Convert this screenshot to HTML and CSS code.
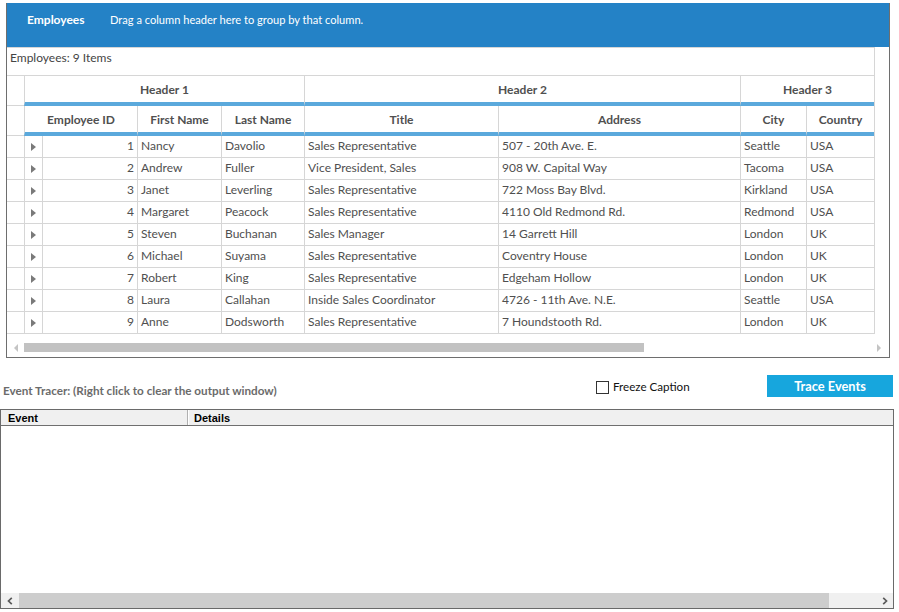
FILE: index.html
```html
<!DOCTYPE html>
<html>
<head>
<meta charset="utf-8">
<link rel="stylesheet" href="styles.css">
</head>
<body>
<div class="panel">
  <div class="titlebar">
    <span class="title">Employees</span>
    <span class="hint">Drag a column header here to group by that column.</span>
  </div>
  <div class="grid">
    <div class="info">Employees: 9 Items</div>

    <div class="ind hdr-ind"></div>
    <div class="hc span4">Header 1</div>
    <div class="hc span2">Header 2</div>
    <div class="hc span2">Header 3</div>

    <div class="ind hdr-ind"></div>
    <div class="hc span2">Employee ID</div>
    <div class="hc">First Name</div>
    <div class="hc">Last Name</div>
    <div class="hc">Title</div>
    <div class="hc">Address</div>
    <div class="hc">City</div>
    <div class="hc">Country</div>

    <div class="ind row-ind"></div><div class="c exp"><span class="tri"></span></div><div class="c num">1</div><div class="c">Nancy</div><div class="c">Davolio</div><div class="c">Sales Representative</div><div class="c">507 - 20th Ave. E.</div><div class="c">Seattle</div><div class="c">USA</div>
    <div class="ind row-ind"></div><div class="c exp"><span class="tri"></span></div><div class="c num">2</div><div class="c">Andrew</div><div class="c">Fuller</div><div class="c">Vice President, Sales</div><div class="c">908 W. Capital Way</div><div class="c">Tacoma</div><div class="c">USA</div>
    <div class="ind row-ind"></div><div class="c exp"><span class="tri"></span></div><div class="c num">3</div><div class="c">Janet</div><div class="c">Leverling</div><div class="c">Sales Representative</div><div class="c">722 Moss Bay Blvd.</div><div class="c">Kirkland</div><div class="c">USA</div>
    <div class="ind row-ind"></div><div class="c exp"><span class="tri"></span></div><div class="c num">4</div><div class="c">Margaret</div><div class="c">Peacock</div><div class="c">Sales Representative</div><div class="c">4110 Old Redmond Rd.</div><div class="c">Redmond</div><div class="c">USA</div>
    <div class="ind row-ind"></div><div class="c exp"><span class="tri"></span></div><div class="c num">5</div><div class="c">Steven</div><div class="c">Buchanan</div><div class="c">Sales Manager</div><div class="c">14 Garrett Hill</div><div class="c">London</div><div class="c">UK</div>
    <div class="ind row-ind"></div><div class="c exp"><span class="tri"></span></div><div class="c num">6</div><div class="c">Michael</div><div class="c">Suyama</div><div class="c">Sales Representative</div><div class="c">Coventry House</div><div class="c">London</div><div class="c">UK</div>
    <div class="ind row-ind"></div><div class="c exp"><span class="tri"></span></div><div class="c num">7</div><div class="c">Robert</div><div class="c">King</div><div class="c">Sales Representative</div><div class="c">Edgeham Hollow</div><div class="c">London</div><div class="c">UK</div>
    <div class="ind row-ind"></div><div class="c exp"><span class="tri"></span></div><div class="c num">8</div><div class="c">Laura</div><div class="c">Callahan</div><div class="c">Inside Sales Coordinator</div><div class="c">4726 - 11th Ave. N.E.</div><div class="c">Seattle</div><div class="c">USA</div>
    <div class="ind row-ind"></div><div class="c exp"><span class="tri"></span></div><div class="c num">9</div><div class="c">Anne</div><div class="c">Dodsworth</div><div class="c">Sales Representative</div><div class="c">7 Houndstooth Rd.</div><div class="c">London</div><div class="c">UK</div>
  </div>
  <div class="hscroll">
    <div class="arrow-box"><span class="tri-left"></span></div>
    <div class="thumb"></div>
    <div class="spacer"></div>
    <div class="arrow-box right"><span class="tri-right"></span></div>
  </div>
</div>

<div class="toolbar">
  <div class="tracer-label">Event Tracer: (Right click to clear the output window)</div>
  <label class="freeze"><span class="box"></span><span class="freeze-text">Freeze Caption</span></label>
  <div class="trace-btn">Trace Events</div>
</div>

<div class="events">
  <div class="ev-head">
    <div class="ev-col ev-event">Event</div>
    <div class="ev-col ev-details">Details</div>
  </div>
  <div class="ev-body"></div>
  <div class="ev-scroll">
    <div class="ev-arrow"><svg width="6" height="8" viewBox="0 0 6 8"><polyline points="4.8,0.8 1.5,4 4.8,7.2" fill="none" stroke="#5a5a5a" stroke-width="1.7"/></svg></div>
    <div class="ev-thumb"></div>
    <div class="ev-track"><svg width="6" height="8" viewBox="0 0 6 8"><polyline points="1.2,0.8 4.5,4 1.2,7.2" fill="none" stroke="#5a5a5a" stroke-width="1.7"/></svg></div>
  </div>
</div>
</body>
</html>
```

FILE: styles.css
```css
html, body {
  margin: 0;
  padding: 0;
  background: #ffffff;
}
body {
  width: 899px;
  height: 612px;
  overflow: hidden;
  font-family: Lato, "Noto Sans", sans-serif;
  font-size: 12px;
  color: #505050;
}

.panel {
  margin: 3px 0 0 6px;
  width: 884px;
  height: 355px;
  box-sizing: border-box;
  border: 1px solid #6e6e6e;
  border-top: 0;
}

.titlebar {
  height: 44px;
  box-sizing: border-box;
  background: #2482c6;
  color: #ffffff;
  display: flex;
  align-items: flex-start;
  padding: 9px 0 0 20px;
  line-height: 16px;
  white-space: nowrap;
}
.title {
  font-weight: bold;
  width: 83px;
}
.hint {
  font-size: 11.1px;
}

.grid {
  display: grid;
  grid-template-columns: 17px 18px 95px 84px 83px 194px 242px 66px 68px;
  width: 868px;
  box-sizing: border-box;
  border-top: 1px solid #d6d6d6;
  border-right: 1px solid #d6d6d6;
}

.info {
  grid-column: 1 / -1;
  height: 28px;
  box-sizing: border-box;
  border-bottom: 1px solid #d6d6d6;
  padding: 2px 0 0 3px;
  line-height: 16px;
  color: #444444;
}

.ind {
  box-sizing: border-box;
  border-bottom: 1px solid #d6d6d6;
}
.hdr-ind { height: 30px; }
.row-ind { height: 22px; }

.hc {
  height: 30px;
  box-sizing: border-box;
  border-left: 1px solid #d6d6d6;
  border-bottom: 4px solid #5ba9dc;
  display: flex;
  align-items: center;
  justify-content: center;
  font-weight: bold;
  color: #505050;
  white-space: nowrap;
}
.span4 { grid-column: span 4; }
.span2 { grid-column: span 2; }

.c {
  height: 22px;
  box-sizing: border-box;
  border-left: 1px solid #d6d6d6;
  border-bottom: 1px solid #d6d6d6;
  padding: 0 3px;
  line-height: 20px;
  white-space: nowrap;
  overflow: hidden;
  color: #4f4f4f;
}
.num { text-align: right; }
.exp {
  display: flex;
  align-items: center;
  padding: 0 0 0 6px;
}
.tri {
  width: 0;
  height: 0;
  border-left: 5px solid #7a7a7a;
  border-top: 4px solid transparent;
  border-bottom: 4px solid transparent;
}

.hscroll {
  height: 23px;
  display: flex;
  align-items: flex-start;
  padding-top: 9px;
  box-sizing: border-box;
}
.arrow-box {
  width: 17px;
  height: 9px;
  display: flex;
  align-items: center;
  justify-content: center;
}
.arrow-box.right { margin-right: 2px; }
.tri-left {
  width: 0;
  height: 0;
  border-right: 4px solid #c4c4c4;
  border-top: 4px solid transparent;
  border-bottom: 4px solid transparent;
}
.tri-right {
  width: 0;
  height: 0;
  border-left: 4px solid #c4c4c4;
  border-top: 4px solid transparent;
  border-bottom: 4px solid transparent;
}
.thumb {
  width: 620px;
  height: 9px;
  background: #c2c2c2;
}
.spacer { flex: 1; }

.toolbar {
  height: 51px;
  display: flex;
  align-items: flex-start;
}
.tracer-label {
  flex: 1;
  margin: 26px 0 0 3px;
  font-size: 11.7px;
  font-weight: bold;
  line-height: 13px;
  color: #6b6b6b;
  white-space: nowrap;
}
.freeze {
  display: flex;
  align-items: center;
  margin: 22px 79px 0 0;
  width: 92px;
  color: #111111;
  line-height: 14px;
  white-space: nowrap;
  font-size: 11.6px;
}
.box {
  flex: none;
  width: 13px;
  height: 13px;
  box-sizing: border-box;
  border: 1px solid #333333;
  background: #ffffff;
  margin-right: 4px;
}
.trace-btn {
  width: 126px;
  height: 22px;
  margin: 17px 6px 0 0;
  background: #17a6dd;
  color: #ffffff;
  font-weight: bold;
  font-size: 12.8px;
  text-align: center;
  line-height: 22px;
}

.events {
  width: 894px;
  height: 200px;
  box-sizing: border-box;
  border: 1px solid #6a6a6a;
  display: flex;
  flex-direction: column;
}
.ev-head {
  height: 16px;
  box-sizing: border-box;
  background: #f0f0f0;
  border-bottom: 1px solid #6f6f6f;
  box-shadow: 0 1px 0 #c8c8c8;
  display: flex;
  font-family: "Liberation Sans", Arial, sans-serif;
  font-size: 11px;
  font-weight: bold;
  color: #000000;
  line-height: 16px;
}
.ev-col { box-sizing: border-box; }
.ev-event {
  width: 187px;
  padding-left: 7px;
  border-right: 1px solid #b0b0b0;
  box-shadow: 1px 0 0 #ffffff;
}
.ev-details {
  flex: 1;
  padding-left: 6px;
}
.ev-body { flex: 1; background: #ffffff; }
.ev-scroll {
  height: 15px;
  display: flex;
  background: #f0f0f0;
}
.ev-arrow {
  width: 18px;
  display: flex;
  align-items: center;
  justify-content: center;
}
.ev-thumb {
  width: 810px;
  background: #cdcdcd;
}
.ev-track {
  flex: 1;
  display: flex;
  align-items: center;
  justify-content: flex-end;
  padding-right: 5px;
}
```
